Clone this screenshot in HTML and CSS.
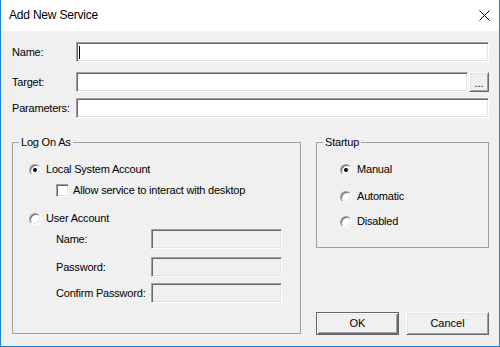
FILE: index.html
```html
<!DOCTYPE html>
<html>
<head>
    <title>Add New Service</title>
    <link rel="stylesheet" href="styles.css">
</head>
<body>
    <div class="window">
        <div class="titlebar">
            <span class="title">Add New Service</span>
            <svg class="close" width="11" height="11" viewBox="0 0 11 11">
                <path d="M0.5 0.5 L10.5 10.5 M10.5 0.5 L0.5 10.5" stroke="#000" stroke-width="1" fill="none"/>
            </svg>
        </div>

        <div class="client">
            <div class="field-row">
                <label class="field-label">Name:</label>
                <div class="edit wide"><span class="caret"></span></div>
            </div>
            <div class="field-row row-target">
                <label class="field-label">Target:</label>
                <div class="edit target"></div>
                <button class="btn browse">...</button>
            </div>
            <div class="field-row row-params">
                <label class="field-label">Parameters:</label>
                <div class="edit wide"></div>
            </div>

            <div class="lower">
                <div class="group logon">
                    <span class="group-title">Log On As</span>
                    <div class="option opt-local">
                        <span class="radio checked"></span>
                        <span>Local System Account</span>
                    </div>
                    <div class="option opt-interact">
                        <span class="checkbox"></span>
                        <span>Allow service to interact with desktop</span>
                    </div>
                    <div class="option opt-user">
                        <span class="radio"></span>
                        <span>User Account</span>
                    </div>
                    <div class="account-row acc-name">
                        <span class="account-label">Name:</span>
                        <div class="edit disabled"></div>
                    </div>
                    <div class="account-row acc-pass">
                        <span class="account-label">Password:</span>
                        <div class="edit disabled"></div>
                    </div>
                    <div class="account-row acc-confirm">
                        <span class="account-label">Confirm Password:</span>
                        <div class="edit disabled"></div>
                    </div>
                </div>

                <div class="right-col">
                    <div class="group startup">
                        <span class="group-title">Startup</span>
                        <div class="option opt-manual">
                            <span class="radio checked"></span>
                            <span>Manual</span>
                        </div>
                        <div class="option opt-auto">
                            <span class="radio"></span>
                            <span>Automatic</span>
                        </div>
                        <div class="option opt-disabled">
                            <span class="radio"></span>
                            <span>Disabled</span>
                        </div>
                    </div>
                    <div class="buttons">
                        <button class="btn push default">OK</button>
                        <button class="btn push">Cancel</button>
                    </div>
                </div>
            </div>
        </div>
    </div>
</body>
</html>
```

FILE: styles.css
```css
body {
    margin: 0;
    padding: 0;
    font-family: "Liberation Sans", Arial, sans-serif;
    font-size: 11px;
    letter-spacing: -0.2px;
    color: #000;
    background: #fff;
}

.window {
    width: 500px;
    height: 347px;
    box-sizing: border-box;
    border: 1px solid #1883d7;
    border-top: none;
    background: #f0f0f0;
}

.titlebar {
    height: 31px;
    box-sizing: border-box;
    background: #fff;
    display: flex;
    align-items: center;
    justify-content: space-between;
    padding: 0 9px 1px 8px;
}

.title {
    font-size: 12px;
    line-height: 14px;
}

.close {
    display: block;
}

.client {
    padding: 11px 10px 11px 11px;
}

/* top edit rows */
.field-row {
    display: flex;
    align-items: center;
    height: 20px;
}

.row-target {
    margin-top: 10px;
}

.row-params {
    margin-top: 6px;
}

.field-label {
    width: 64px;
    line-height: 13px;
}

.edit {
    height: 20px;
    box-sizing: border-box;
    background: #fff;
    border: 1px solid;
    border-color: #a0a0a0 #fff #fff #a0a0a0;
    box-shadow: inset 1px 1px 0 #696969, inset -1px -1px 0 #e3e3e3;
    display: flex;
    align-items: center;
}

.edit.wide {
    flex: 1;
}

.edit.target {
    width: 392px;
}

.edit.disabled {
    width: 131px;
    background: #f0f0f0;
}

.caret {
    display: block;
    width: 1px;
    height: 13px;
    margin-left: 2px;
    background: #000;
}

/* buttons */
.btn {
    font-family: "Liberation Sans", Arial, sans-serif;
    font-size: 11px;
    color: #000;
    background: #f0f0f0;
    box-sizing: border-box;
    border: 1px solid;
    border-color: #fff #696969 #696969 #fff;
    box-shadow: inset 1px 1px 0 #e3e3e3, inset -1px -1px 0 #a0a0a0;
    padding: 0;
    margin: 0;
}

.browse {
    width: 20px;
    height: 20px;
    margin-left: 1px;
    line-height: 14px;
    padding-top: 2px;
}

.push {
    width: 83px;
    height: 23px;
    line-height: 13px;
}

.push.default {
    border: 1px solid #646464;
    box-shadow: inset 1px 1px 0 #fff, inset -1px -1px 0 #696969,
                inset 2px 2px 0 #e3e3e3, inset -2px -2px 0 #a0a0a0;
}

/* lower area */
.lower {
    display: flex;
    margin-top: 24px;
    height: 193px;
}

.group {
    position: relative;
    box-sizing: border-box;
    border: 1px solid #a0a0a0;
}

.group-title {
    position: absolute;
    top: -7px;
    left: 6px;
    padding: 0 2px;
    line-height: 13px;
    background: #f0f0f0;
}

.logon {
    width: 289px;
    height: 192px;
}

.right-col {
    width: 173px;
    margin-left: 15px;
    display: flex;
    flex-direction: column;
    justify-content: space-between;
}

.startup {
    height: 106px;
}

.option {
    display: flex;
    align-items: center;
    height: 13px;
    line-height: 13px;
}

.logon .option {
    padding-left: 16px;
}

.startup .option {
    padding-left: 23px;
}

.opt-local,
.opt-manual {
    margin-top: 20px;
}

.logon .opt-interact {
    margin-top: 8px;
    padding-left: 43px;
}

.opt-user {
    margin-top: 15px;
}

.opt-auto {
    margin-top: 14px;
}

.opt-disabled {
    margin-top: 12px;
}

.radio {
    position: relative;
    width: 12px;
    height: 12px;
    box-sizing: border-box;
    border-radius: 50%;
    border: 1px solid;
    border-color: #a0a0a0 #fff #fff #a0a0a0;
    box-shadow: inset 1px 1px 0 #696969, inset -1px -1px 0 #e3e3e3;
    background: #fff;
    margin-right: 5px;
}

.radio.checked::after {
    content: "";
    position: absolute;
    left: 3px;
    top: 3px;
    width: 4px;
    height: 4px;
    border-radius: 50%;
    background: #000;
}

.checkbox {
    width: 13px;
    height: 13px;
    box-sizing: border-box;
    border: 1px solid;
    border-color: #a0a0a0 #fff #fff #a0a0a0;
    box-shadow: inset 1px 1px 0 #696969, inset -1px -1px 0 #e3e3e3;
    background: #fff;
    margin-right: 4px;
}

.account-row {
    display: flex;
    align-items: center;
    height: 20px;
    padding-left: 43px;
}

.account-label {
    width: 95px;
    line-height: 13px;
}

.acc-name {
    margin-top: 4px;
}

.acc-pass {
    margin-top: 8px;
}

.acc-confirm {
    margin-top: 6px;
}

.buttons {
    display: flex;
    justify-content: space-between;
}
```
